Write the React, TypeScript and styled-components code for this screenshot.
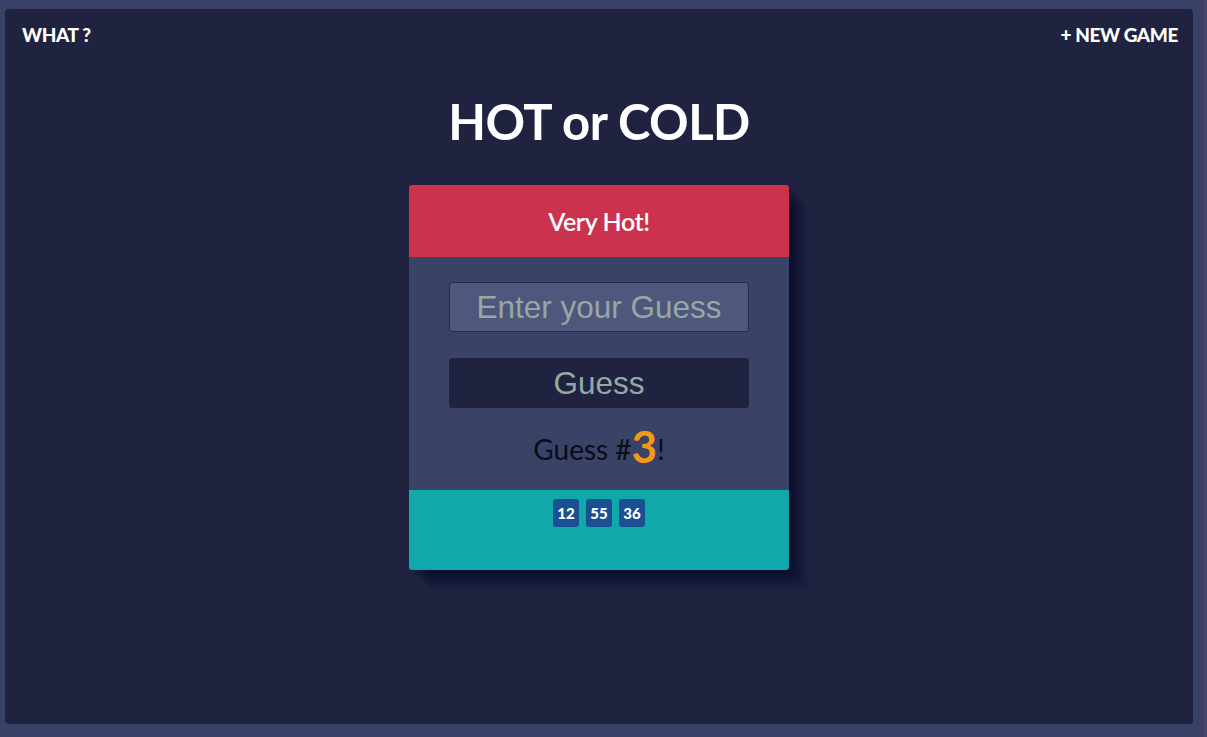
import React from "react";
import styled, { createGlobalStyle } from "styled-components";

const Global = createGlobalStyle`
  html, body { margin: 0; padding: 0; }
  body {
    background: linear-gradient(to right, #3a4166 0, #3a4166 1204px, #5b3c63 1204px, #5b3c63 1206px, #3a4166 1206px);
    font-family: Lato, "Open Sans", sans-serif;
    height: 737px;
    overflow: hidden;
  }
  #root { height: 737px; }
`;

const Page = styled.div`
  height: 737px;
  box-sizing: border-box;
  padding: 9px 14px 13px 5px;
  display: flex;
`;

const Panel = styled.div`
  flex: 1;
  background: #1f2340;
  border-radius: 4px;
  display: flex;
  flex-direction: column;
  align-items: center;
`;

const Nav = styled.nav`
  align-self: stretch;
  display: flex;
  justify-content: space-between;
  padding: 14px 15px 0 17px;
`;

const NavLink = styled.a`
  color: #fff;
  font-family: Lato, sans-serif;
  font-weight: 900;
  font-size: 19px;
  line-height: 24px;
  text-decoration: none;
  letter-spacing: -0.4px;
`;

const Title = styled.h1`
  margin: 46px 0 0;
  color: #fff;
  font-family: Lato, sans-serif;
  font-weight: 700;
  font-size: 49px;
  line-height: 56px;
  letter-spacing: -0.5px;
`;

const Card = styled.section`
  margin-top: 36px;
  width: 380px;
  border-radius: 3px;
  box-shadow: ${Array.from({ length: 20 }, (_, i) => `${i + 1}px ${i + 1}px 0 rgba(10, 12, 30, 0.03)`).join(", ")};
`;

const Header = styled.div`
  height: 72px;
  background: #cb324e;
  border-radius: 3px 3px 0 0;
  display: flex;
  align-items: center;
  justify-content: center;
  color: #fff;
  font-family: Lato, sans-serif;
  font-size: 25px;
  font-weight: 600;
  letter-spacing: -0.4px;
`;

const Body = styled.div`
  height: 233px;
  box-sizing: border-box;
  background: #3a4266;
  padding: 25px 40px 0;
  display: flex;
  flex-direction: column;
  align-items: stretch;
`;

const GuessInput = styled.input`
  height: 50px;
  box-sizing: border-box;
  background: #4f577c;
  border: 1px solid #262b48;
  border-radius: 3px;
  color: #95a8a4;
  font-family: "Liberation Sans", Arial, sans-serif;
  font-size: 31.5px;
  text-align: center;
  outline: none;
  padding: 0;
  &::placeholder { color: #95a8a4; opacity: 1; }
`;

const GuessButton = styled.button`
  margin-top: 26px;
  height: 50px;
  background: #1f2340;
  border: none;
  border-radius: 3px;
  color: #95a8a4;
  font-family: "Liberation Sans", Arial, sans-serif;
  font-size: 31.5px;
  padding: 0;
`;

const Counter = styled.p`
  margin: 16px 0 0;
  text-align: center;
  color: #0b0c18;
  font-family: Lato, sans-serif;
  font-size: 28px;
  line-height: 44px;
`;

const Count = styled.span`
  color: #f39a13;
  font-weight: 700;
  font-size: 44px;
  vertical-align: -3px;
`;

const Footer = styled.div`
  height: 80px;
  box-sizing: border-box;
  background: #10a8aa;
  border-radius: 0 0 3px 3px;
  padding-top: 9px;
  display: flex;
  justify-content: center;
  align-items: flex-start;
  gap: 7px;
`;

const Badge = styled.span`
  width: 26px;
  height: 28px;
  border-radius: 3px;
  background: #1b4f94;
  color: #fff;
  font-family: Lato, sans-serif;
  font-weight: 900;
  font-size: 15px;
  display: flex;
  align-items: center;
  justify-content: center;
`;

const guesses = [12, 55, 36];

export default function App() {
  return (
    <>
      <Global />
      <Page>
        <Panel>
          <Nav>
            <NavLink href="#">WHAT ?</NavLink>
            <NavLink href="#">+ NEW GAME</NavLink>
          </Nav>
          <Title>HOT or COLD</Title>
          <Card>
            <Header>Very Hot!</Header>
            <Body>
              <GuessInput placeholder="Enter your Guess" />
              <GuessButton>Guess</GuessButton>
              <Counter>
                Guess #<Count>3</Count>!
              </Counter>
            </Body>
            <Footer>
              {guesses.map((g) => (
                <Badge key={g}>{g}</Badge>
              ))}
            </Footer>
          </Card>
        </Panel>
      </Page>
    </>
  );
}
